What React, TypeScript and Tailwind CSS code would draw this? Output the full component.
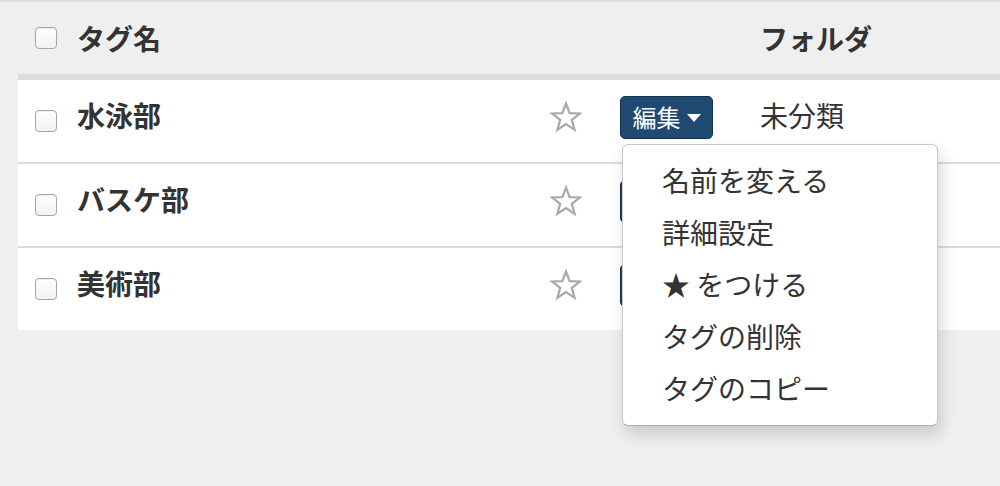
import React from 'react'

const TAGS = ['水泳部', 'バスケ部', '美術部']

const MENU_ITEMS = ['名前を変える', '詳細設定', '★ をつける', 'タグの削除', 'タグのコピー']

const FONT = "font-['Noto_Sans_CJK_JP','Noto_Sans',sans-serif]"

function Checkbox() {
  return (
    <span className="block h-[22px] w-[22px] rounded-[4px] border border-[#a6a6a6] bg-gradient-to-b from-white to-[#f2f2f2] shadow-[inset_0_1px_1px_rgba(0,0,0,0.08)]" />
  )
}

function StarOutline() {
  return (
    <svg width="32" height="31" viewBox="0 0 32 31" fill="none">
      <path
        d="M16 2.5l3.6 9.6 10.2.4-8 6.4 2.8 9.9L16 23.1l-8.6 5.7 2.8-9.9-8-6.4 10.2-.4z"
        stroke="#a9a9a9"
        strokeWidth="2.2"
        strokeLinejoin="miter"
      />
    </svg>
  )
}

function EditButton() {
  return (
    <button className="flex h-[43px] w-[93px] items-center justify-center gap-[6px] rounded-[5px] border border-[#13324f] bg-[#204a72] pb-[1px] text-[24px] leading-none text-white">
      <span>編集</span>
      <svg width="14" height="8" viewBox="0 0 14 8" className="mt-[3px]">
        <path d="M0 0h14L7 8z" fill="#fff" />
      </svg>
    </button>
  )
}

export default function App() {
  return (
    <div className={`min-h-[486px] w-full overflow-hidden border-t-2 border-[#dcdcdc] bg-[#efefef] text-[#333] ${FONT}`}>
      <div className="ml-[18px]">
        {/* header */}
        <div className="flex h-[78px] items-center border-b-[6px] border-[#dcdcdc]">
          <div className="w-[59px] pl-[17px]">
            <Checkbox />
          </div>
          <div className="w-[683px] text-[28px] font-bold">タグ名</div>
          <div className="text-[28px] font-bold">フォルダ</div>
        </div>

        {/* rows */}
        <div className="bg-white">
          {TAGS.map((tag, i) => (
            <div
              key={tag}
              className={`flex items-center ${i < TAGS.length - 1 ? 'h-[84px] border-b-2 border-[#dcdcdc]' : 'h-[82px]'}`}
            >
              <div className="w-[59px] pl-[17px]">
                <Checkbox />
              </div>
              <div className="w-[469px] pb-[12px] text-[28px] font-bold">{tag}</div>
              <div className="flex w-[40px] justify-center pb-[10px]">
                <StarOutline />
              </div>
              <div className="relative ml-[34px] w-[140px] pb-[8px]">
                <EditButton />
                {i === 0 && (
                  <div className="absolute left-[2px] top-[48px] z-10 w-[316px] rounded-[6px] border border-[#c8c8c8] border-b-[#b0b0b0] bg-white py-[10px] shadow-[3px_8px_16px_rgba(0,0,0,0.16)]">
                    {MENU_ITEMS.map((item) => (
                      <div key={item} className="flex h-[52px] items-center pb-[2px] pl-[39px] text-[28px] leading-none">
                        {item}
                      </div>
                    ))}
                  </div>
                )}
              </div>
              {i === 0 && <div className="pb-[12px] text-[28px]">未分類</div>}
            </div>
          ))}
        </div>
      </div>
    </div>
  )
}
